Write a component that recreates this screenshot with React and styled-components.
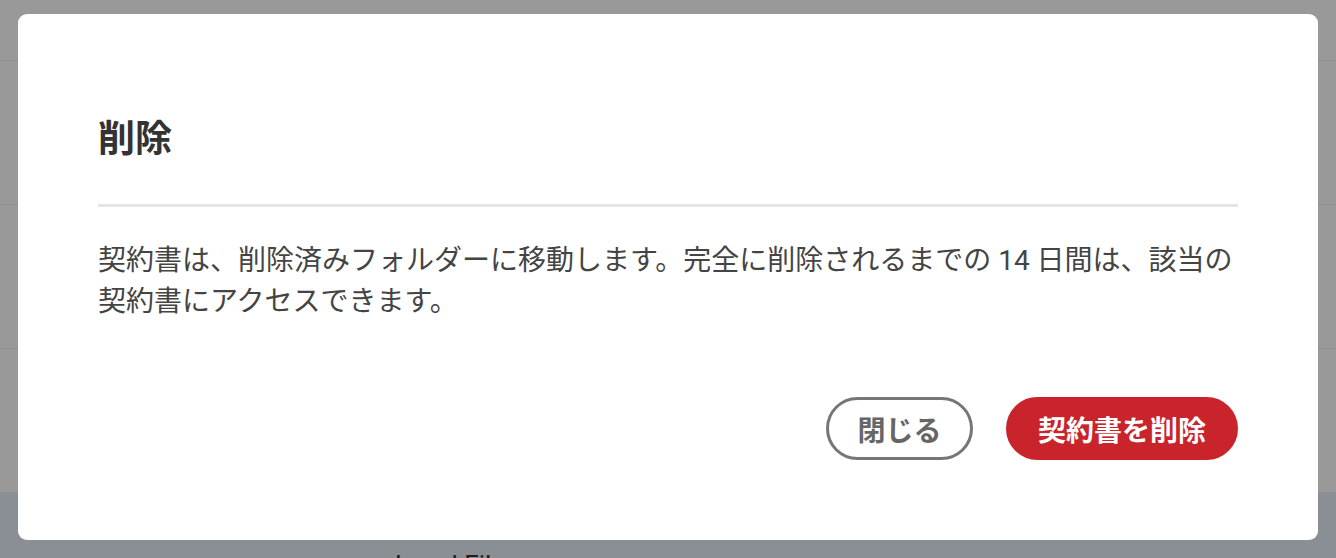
import React from "react"
import styled, { createGlobalStyle } from "styled-components"

const GlobalStyle = createGlobalStyle`
	html, body {
		margin: 0;
		padding: 0;
		height: 100%;
		overflow: hidden;
		background: #fff;
		font-family: Roboto, "Noto Sans CJK JP", sans-serif;
	}
`

const Page = styled.div`
	width: 1336px;
	height: 558px;
	overflow: hidden;
`
const RowList = styled.div`
	margin-top: -83px;
`
const Row = styled.div`
	display: flex;
	align-items: center;
	height: 143px;
	padding-left: 395px;
	border-bottom: 1px solid #eeeeee;
	background: ${(p) => (p.selected ? "#e7eefa" : "#ffffff")};
	font-size: 26px;
	color: #333;
`

const Overlay = styled.div`
	position: fixed;
	inset: 0;
	background: rgba(0, 0, 0, 0.4);
	display: flex;
	justify-content: center;
	align-items: flex-start;
	padding-top: 14px;
`
const Modal = styled.div`
	width: 1300px;
	box-sizing: border-box;
	background: #fff;
	border-radius: 9px;
	padding: 97px 80px 80px;
	display: flex;
	flex-direction: column;
`
const Title = styled.h2`
	margin: 0;
	padding-bottom: 43px;
	border-bottom: 3px solid #e5e5e5;
	font-size: 37px;
	line-height: 50px;
	font-weight: 700;
	color: #333;
	font-family: "Noto Sans CJK JP", sans-serif;
`
const Message = styled.p`
	margin: 33px 0 0;
	font-size: 28px;
	line-height: 41px;
	color: #444;
`
const Actions = styled.div`
	display: flex;
	justify-content: flex-end;
	gap: 33px;
	margin-top: 75px;
`
const Button = styled.button`
	height: 63px;
	box-sizing: border-box;
	padding: 0;
	width: ${(p) => (p.primary ? "232px" : "147px")};
	border-radius: 32px;
	border: 3px solid ${(p) => (p.primary ? "#c9232b" : "#767676")};
	background: ${(p) => (p.primary ? "#c9232b" : "#fff")};
	color: ${(p) => (p.primary ? "#fff" : "#666")};
	font-family: "Noto Sans CJK JP", sans-serif;
	font-size: 28px;
	font-weight: 700;
	cursor: pointer;
`

export default function App() {
	return (
		<>
			<GlobalStyle />
			<Page>
				<RowList>
					<Row>20240000</Row>
					<Row />
					<Row />
					<Row />
					<Row selected>Legal File</Row>
				</RowList>
			</Page>
			<Overlay>
				<Modal>
					<Title>削除</Title>
					<Message>
						契約書は、削除済みフォルダーに移動します。完全に削除されるまでの 14 日間は、該当の契約書にアクセスできます。
					</Message>
					<Actions>
						<Button>閉じる</Button>
						<Button primary>契約書を削除</Button>
					</Actions>
				</Modal>
			</Overlay>
		</>
	)
}
